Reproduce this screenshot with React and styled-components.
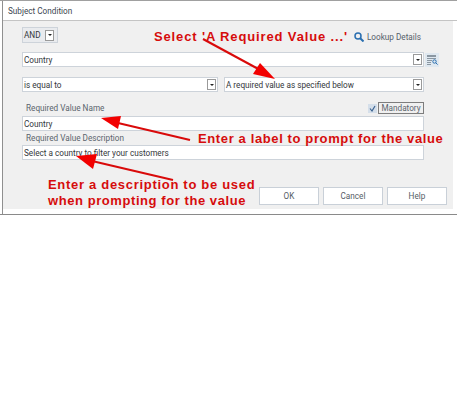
import React from 'react';
import styled, { createGlobalStyle } from 'styled-components';

const GlobalStyle = createGlobalStyle`
  html, body { margin: 0; padding: 0; background: #fff; }
  body { width: 457px; height: 409px; overflow: hidden; font-family: Roboto, "Open Sans", sans-serif; }
`;

const Page = styled.div`
  position: relative;
  width: 457px;
  height: 409px;
`;

// top and bottom rules run the full width, the left rule sits 2px in
const Dialog = styled.div`
  border-top: 1px solid #a0a0a0;
  border-bottom: 1px solid #8a8a8a;
  padding-left: 2px;
`;

const Frame = styled.div`
  height: 213px;
  border-left: 1px solid #8f8f8f;
  display: flex;
  flex-direction: column;
`;

const TitleBar = styled.div`
  height: 19px;
  flex: none;
  display: flex;
  align-items: center;
  padding-left: 5px;
  font-size: 8.2px;
  color: #3c4650;
  border-bottom: 1px solid #c4c4c4;
`;

const Body = styled.div`
  width: 450px;
  height: 188px;
  flex: none;
  background: #f0f0f0;
  box-sizing: border-box;
  padding: 6px 6px 0 19px;
  display: flex;
  flex-direction: column;
`;

const Row = styled.div`
  display: flex;
  align-items: center;
  gap: ${p => p.$gap || 0}px;
  margin-top: ${p => p.$top || 0}px;
`;

const Field = styled.div`
  width: ${p => p.$width}px;
  height: ${p => p.$height || 15}px;
  flex: none;
  box-sizing: border-box;
  display: flex;
  align-items: center;
  justify-content: space-between;
  padding: 0 1px 0 1px;
  background: ${p => p.$tint ? '#e9ebee' : '#fff'};
  border: 1px solid #cdd3da;
  font-size: 8.2px;
  color: #33373b;
  white-space: nowrap;
`;

const DropButton = styled.span`
  width: 9px;
  height: 11px;
  flex: none;
  box-sizing: border-box;
  background: #fff;
  border: 1px solid #9a9a9a;
  margin-right: ${p => p.$inset || 0}px;
  display: flex;
  align-items: center;
  justify-content: center;
  &::after {
    content: '';
    border-left: 2px solid transparent;
    border-right: 2px solid transparent;
    border-top: 2px solid #222;
  }
`;

const Lookup = styled.div`
  display: flex;
  align-items: center;
  gap: 3px;
  margin-left: auto;
  margin-right: 26px;
  margin-top: 4px;
  font-size: 8.2px;
  color: #55606b;
`;

const TableButton = styled.div`
  width: 14px;
  height: 14px;
  margin-left: 1px;
  flex: none;
  background: #dfe8f0;
  display: flex;
  align-items: center;
  justify-content: center;
`;

const FieldLabel = styled.div`
  font-size: 8.2px;
  line-height: 9px;
  color: #5b646d;
  padding-left: 4px;
  margin-top: ${p => p.$top || 0}px;
`;

const NameRow = styled.div`
  width: 402px;
  margin-top: 10px;
  height: 12px;
  display: flex;
  align-items: center;
  justify-content: space-between;
`;

const Mandatory = styled.div`
  display: flex;
  align-items: center;
  gap: 1px;
`;

const CheckBox = styled.span`
  width: 9px;
  height: 9px;
  background: #d5dfea;
  color: #3d6491;
  display: flex;
  align-items: center;
  justify-content: center;
`;

const MandatoryText = styled.span`
  height: 12px;
  width: 46px;
  box-sizing: border-box;
  border: 1px solid #7d7d7d;
  font-size: 8.2px;
  line-height: 10px;
  text-align: center;
  color: #5b646d;
`;

const Footer = styled.div`
  display: flex;
  justify-content: flex-end;
  gap: 4px;
  margin-top: 27px;
`;

const Button = styled.div`
  width: 60px;
  height: 18px;
  box-sizing: border-box;
  border: 1px solid #c9d0d8;
  background: #fff;
  font-size: 8.2px;
  line-height: 16px;
  text-align: center;
  color: #555d65;
`;

const Note = styled.div`
  position: absolute;
  left: ${p => p.$x}px;
  top: ${p => p.$y}px;
  font-family: "Liberation Sans", Arial, sans-serif;
  font-weight: 700;
  font-size: 13px;
  line-height: 16px;
  letter-spacing: ${p => p.$spacing}px;
  color: #d60c0c;
  white-space: nowrap;
`;

const ArrowLayer = styled.svg`
  position: absolute;
  left: 0;
  top: 0;
  pointer-events: none;
`;

const ArrowLine = styled.line`
  stroke: #d90a0a;
  stroke-width: 2;
`;

const ArrowHead = styled.polygon`
  fill: #f20000;
`;

function App() {
  return (
    <Page>
      <GlobalStyle />
      <Dialog>
        <Frame>
          <TitleBar>Subject Condition</TitleBar>
          <Body>
            <Row>
              <Field $width={36} $height={16} $tint>
                AND
                <DropButton $inset={2} />
              </Field>
              <Lookup>
                <svg width="10" height="10" viewBox="0 0 10 10">
                  <circle cx="4" cy="4" r="3" fill="none" stroke="#2a6fb0" strokeWidth="1.5" />
                  <line x1="6.2" y1="6.2" x2="9.5" y2="9.5" stroke="#2a6fb0" strokeWidth="2" />
                </svg>
                Lookup Details
              </Lookup>
            </Row>
            <Row $top={9}>
              <Field $width={402}>
                Country
                <DropButton />
              </Field>
              <TableButton>
                <svg width="12" height="12" viewBox="0 0 12 12">
                  <path d="M1 1h9v2H1zM1 4h9v1H1zM1 6h5v1H1zM1 8h4v1H1zM1 10h4v1H1z" fill="#8b97a2" />
                  <circle cx="8.5" cy="7.5" r="1.7" fill="none" stroke="#2a6fb0" />
                  <line x1="9.8" y1="8.8" x2="11.6" y2="10.6" stroke="#2a6fb0" />
                </svg>
              </TableButton>
            </Row>
            <Row $top={10} $gap={6}>
              <Field $width={196}>
                is equal to
                <DropButton />
              </Field>
              <Field $width={200}>
                A required value as specified below
                <DropButton />
              </Field>
            </Row>
            <NameRow>
              <FieldLabel>Required Value Name</FieldLabel>
              <Mandatory>
                <CheckBox>
                  <svg width="7" height="7" viewBox="0 0 7 7">
                    <path d="M1 3.5 L3 6 L6 1" fill="none" stroke="currentColor" strokeWidth="1.2" />
                  </svg>
                </CheckBox>
                <MandatoryText>Mandatory</MandatoryText>
              </Mandatory>
            </NameRow>
            <Row $top={2}>
              <Field $width={402}>Country</Field>
            </Row>
            <FieldLabel $top={3}>Required Value Description</FieldLabel>
            <Row $top={2}>
              <Field $width={402}>Select a country to filter your customers</Field>
            </Row>
            <Footer>
              <Button>OK</Button>
              <Button>Cancel</Button>
              <Button>Help</Button>
            </Footer>
          </Body>
        </Frame>
      </Dialog>

      <ArrowLayer width="457" height="409" viewBox="0 0 457 409">
        <ArrowLine x1="203" y1="39" x2="262" y2="71" />
        <ArrowHead points="275,79 253,74 260,63" />
        <ArrowLine x1="190" y1="140" x2="118" y2="123" />
        <ArrowHead points="101,118 121,116 118,129" />
        <ArrowLine x1="173" y1="180" x2="92" y2="161" />
        <ArrowHead points="76,156 97,154 93,169" />
      </ArrowLayer>

      <Note $x={154} $y={29} $spacing={0.86}>Select 'A Required Value ...'</Note>
      <Note $x={198} $y={131} $spacing={0.62}>Enter a label to prompt for the value</Note>
      <Note $x={48} $y={177} $spacing={0.7}>Enter a description to be used</Note>
      <Note $x={48} $y={193} $spacing={0.57}>when prompting for the value</Note>
    </Page>
  );
}

export default App;
